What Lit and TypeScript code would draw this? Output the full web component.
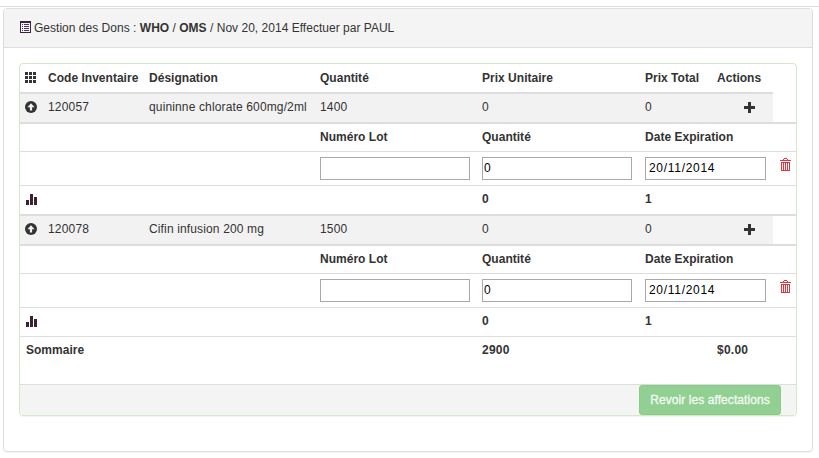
import { LitElement, html, css, svg, nothing } from "lit";
import { customElement } from "lit/decorators.js";

interface Item {
  code: string;
  name: string;
  qty: string;
}

const items: Item[] = [
  { code: "120057", name: "quininne chlorate 600mg/2ml", qty: "1400" },
  { code: "120078", name: "Cifin infusion 200 mg", qty: "1500" },
];

const listIcon = html`<svg class="list" width="11" height="12" viewBox="0 0 11 12" shape-rendering="crispEdges">
  <path fill="#3b2340" fill-rule="evenodd" d="M0 0h11v12H0zM1 2v9h9V2z" />
  <path fill="#4b3560" d="M2 3h1v1H2zM4 3h5v1H4zM2 5h1v1H2zM4 5h5v1H4zM2 7h1v1H2zM4 7h5v1H4zM2 9h1v1H2zM4 9h5v1H4z" />
</svg>`;

const gridIcon = html`<svg width="11" height="11" viewBox="0 0 11 11" shape-rendering="crispEdges">
  ${[0, 4, 8].map((y) => [0, 4, 8].map((x) => svg`<rect x=${x} y=${y} width="3" height="3" fill="#333" />`))}
</svg>`;

const upIcon = html`<svg width="12" height="12" viewBox="0 0 12 12">
  <circle cx="6" cy="6" r="6" fill="#333" />
  <path fill="#f2f2f2" d="M6 2.2 9.6 6.2H7.1v3.3H4.9V6.2H2.4z" />
</svg>`;

const barsIcon = html`<svg width="11" height="11" viewBox="0 0 11 11" shape-rendering="crispEdges">
  <path fill="#3c2133" d="M0 6h3v5H0zM4 0h3v11H4zM8 3h3v8H8z" />
</svg>`;

const plusIcon = html`<svg width="11" height="11" viewBox="0 0 11 11" shape-rendering="crispEdges">
  <path fill="#333" d="M4 0h3v4h4v3H7v4H4V7H0V4h4z" />
</svg>`;

const trashIcon = html`<svg width="11" height="13" viewBox="0 0 11 13" shape-rendering="crispEdges">
  <path fill="#dc3540" d="M4 0h3v1H4zM3 1h1v1H3zM7 1h1v1H7zM0 2h11v1H0zM1 4h9v1H1zM1 5h1v7H1zM3 5h1v7H3zM5 5h1v7H5zM7 5h1v7H7zM9 5h1v7H9zM1 12h9v1H1z" />
</svg>`;

@customElement("app-root")
export class AppRoot extends LitElement {
  static styles = css`
    :host {
      display: block;
      box-sizing: border-box;
      height: 458px;
      padding: 6px 6px 0 3px;
      background: #fff;
      color: #333;
      font: 12px/17px "Liberation Sans", Arial, sans-serif;
      letter-spacing: 0.02px;
      white-space: nowrap;
      overflow: hidden;
    }
    * { box-sizing: border-box; }
    svg { display: block; }
    b { font-weight: bold; }
    .rule { height: 1px; margin: 0 -6px 1px -3px; background: #ddd; }
    .panel {
      height: 444px;
      border: 1px solid #ddd;
      border-radius: 4px;
      box-shadow: 0 1px 1px rgba(0, 0, 0, 0.05);
    }
    .heading {
      display: flex;
      height: 39px;
      padding: 11px 0 0 16px;
      background: #f4f4f4;
      border-bottom: 1px solid #ddd;
      border-radius: 3px 3px 0 0;
    }
    .list { margin: 1px 3px 0 0; }
    .inner {
      margin: 15px 15px 0;
      height: 353px;
      border: 1px solid #d6e9c6;
      border-radius: 4px;
      box-shadow: 0 1px 1px rgba(0, 0, 0, 0.05);
      overflow: hidden;
    }
    .row {
      display: grid;
      grid-template-columns: 28px 101px 171px 162px 163px 72px 63px 1fr;
      align-items: start;
      width: 777px;
    }
    .row > * { padding-top: 5px; }
    .head { height: 28px; font-weight: bold; }
    .head > * { padding-top: 6px; }
    .row > .ico { padding: 8px 0 0 5px; }
    .item {
      height: 30px;
      width: 753px;
      border-top: 2px solid #ddd;
      background: #f2f2f2;
      grid-template-columns: 28px 101px 171px 162px 163px 72px 56px;
      letter-spacing: 0.14px;
    }
    .item > .ico { padding-top: 7px; }
    .item > .plus { padding: 8px 0 0 27px; }
    .item > .cell { letter-spacing: 0.2px; }
    .cap { height: 29px; border-top: 2px solid #ddd; font-weight: bold; }
    .fields { height: 34px; border-top: 1px solid #ddd; }
    input {
      display: block;
      width: 150px;
      height: 23px;
      margin: 0;
      padding: 0 0 1px 1px;
      border: 1px solid #a9a9a9;
      border-radius: 0;
      background: #fff;
      color: #000;
      font: 12px "Liberation Sans", Arial, sans-serif;
      letter-spacing: 0.7px;
      outline: none;
    }
    .date input { width: 121px; padding-left: 3px; }
    .fields > .trash { padding-top: 6px; }
    .sub { height: 29px; border-top: 1px solid #ddd; font-weight: bold; }
    .sub > .ico { padding-left: 6px; }
    .edge { height: 2px; background: #ddd; margin-bottom: -2px; }
    .total { height: 48px; border-top: 1px solid #ddd; font-weight: bold; }
    .total > .label { grid-column: 1 / 4; padding-left: 6px; }
    .total > .sum { letter-spacing: 0.25px; }
    .footer {
      display: flex;
      justify-content: flex-end;
      height: 31px;
      padding-right: 15px;
      border-top: 1px solid #ddd;
      background: #f4f4f4;
    }
    button {
      width: 142px;
      height: 30px;
      padding: 0;
      border: 1px solid #88cc88;
      border-radius: 3px;
      background: #92cf92;
      color: #f3fbf3;
      font: 12px "Liberation Sans", Arial, sans-serif;
      letter-spacing: 0.08px;
      -webkit-text-stroke: 0.3px #f3fbf3;
    }
  `;

  private item(item: Item, i: number) {
    return html`
      ${i > 0 ? html`<div class="edge"></div>` : nothing}
      <div class="row item">
        <span class="ico">${upIcon}</span>
        <span class="cell">${item.code}</span>
        <span>${item.name}</span>
        <span class="cell">${item.qty}</span>
        <span>0</span>
        <span>0</span>
        <span class="plus">${plusIcon}</span>
      </div>
      <div class="row cap">
        <span></span><span></span><span></span>
        <span>Numéro Lot</span>
        <span>Quantité</span>
        <span>Date Expiration</span>
      </div>
      <div class="row fields">
        <span></span><span></span><span></span>
        <span><input /></span>
        <span><input value="0" /></span>
        <span class="date"><input value="20/11/2014" /></span>
        <span></span>
        <span class="trash">${trashIcon}</span>
      </div>
      <div class="row sub">
        <span class="ico">${barsIcon}</span>
        <span></span><span></span><span></span>
        <span>0</span>
        <span>1</span>
      </div>
    `;
  }

  render() {
    return html`
      <div class="rule"></div>
      <div class="panel">
        <div class="heading">
          ${listIcon}
          <span>Gestion des Dons : <b>WHO</b> / <b>OMS</b> / Nov 20, 2014 Effectuer par PAUL</span>
        </div>
        <div class="inner">
          <div class="row head">
            <span class="ico">${gridIcon}</span>
            <span>Code Inventaire</span>
            <span>Désignation</span>
            <span>Quantité</span>
            <span>Prix Unitaire</span>
            <span>Prix Total</span>
            <span>Actions</span>
          </div>
          ${items.map((it, i) => this.item(it, i))}
          <div class="row total">
            <span class="label">Sommaire</span>
            <span></span>
            <span class="sum">2900</span>
            <span></span>
            <span class="sum">$0.00</span>
          </div>
          <div class="footer"><button>Revoir les affectations</button></div>
        </div>
      </div>
    `;
  }
}
